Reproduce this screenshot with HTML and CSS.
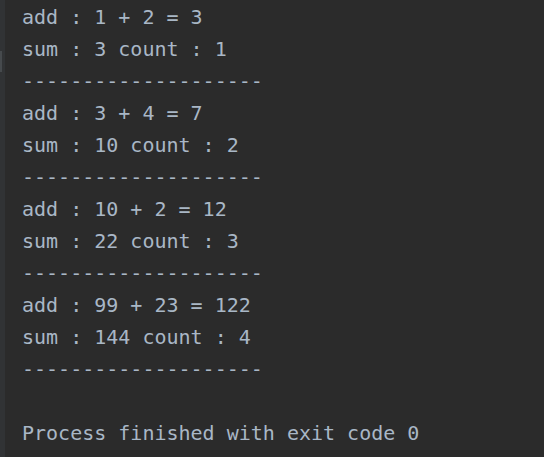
FILE: index.html
```html
<!DOCTYPE html>
<html>
<head>
<meta charset="utf-8">
<link rel="stylesheet" href="styles.css">
</head>
<body>
<div class="console">
  <div class="gutter"><div class="thumb"></div></div>
  <pre class="output">add : 1 + 2 = 3
sum : 3 count : 1
--------------------
add : 3 + 4 = 7
sum : 10 count : 2
--------------------
add : 10 + 2 = 12
sum : 22 count : 3
--------------------
add : 99 + 23 = 122
sum : 144 count : 4
--------------------

Process finished with exit code 0</pre>
</div>
</body>
</html>
```
FILE: styles.css
```css
html, body {
  margin: 0;
  padding: 0;
  background: #2b2b2b;
  height: 100%;
  overflow: hidden;
}
.console {
  display: flex;
  height: 457px;
  background: #2b2b2b;
}
.gutter {
  width: 5px;
  flex: none;
  background: #313335;
  padding-top: 51px;
}
.thumb {
  width: 2px;
  height: 21px;
  background: #464a4d;
}
.output {
  margin: 0;
  padding: 1px 0 0 17px;
  font-family: "DejaVu Sans Mono", monospace;
  font-size: 20px;
  line-height: 32px;
  color: #a9b7c6;
}
```
